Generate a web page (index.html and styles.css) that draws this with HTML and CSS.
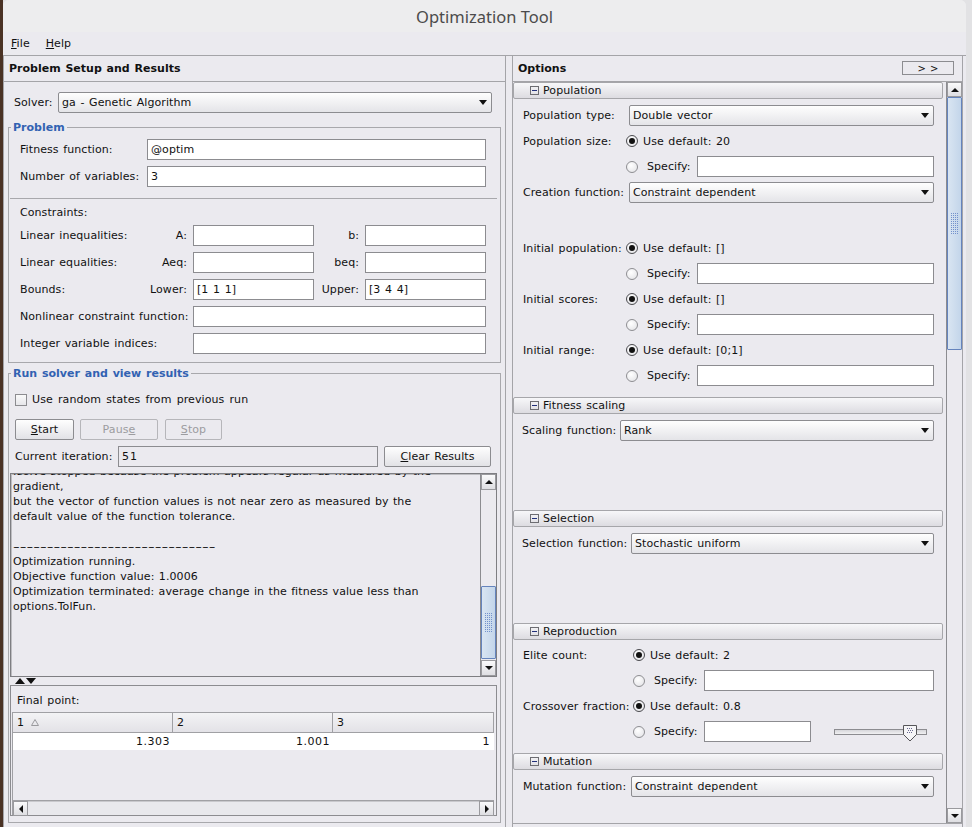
FILE: index.html
```html
<!DOCTYPE html>
<html>
<head>
<meta charset="utf-8">
<title>Optimization Tool</title>
<link rel="stylesheet" href="styles.css">
</head>
<body>
<div class="window">
  <div class="titlebar">Optimization Tool</div>
  <div class="menubar"><span class="menu"><u>F</u>ile</span><span class="menu"><u>H</u>elp</span></div>
  <div class="main">
    <div class="left">
      <div class="panel-head">Problem Setup and Results</div>
      <div class="left-body">
        <div class="solver-row">
          <span class="solver-lbl">Solver:</span>
          <div class="combo solver-combo"><span class="combo-text">ga - Genetic Algorithm</span><span class="caret"></span></div>
        </div>

        <div class="group problem">
          <div class="group-title">Problem</div>
          <div class="fit-grid">
            <span>Fitness function:</span><div class="field">@optim</div>
            <span>Number of variables:</span><div class="field">3</div>
          </div>
          <div class="sep"></div>
          <div class="constraints-title">Constraints:</div>
          <div class="cgrid">
            <span>Linear inequalities:</span><span class="sub">A:</span><div class="field"></div><span class="sub">b:</span><div class="field"></div>
            <span>Linear equalities:</span><span class="sub">Aeq:</span><div class="field"></div><span class="sub">beq:</span><div class="field"></div>
            <span>Bounds:</span><span class="sub">Lower:</span><div class="field">[1 1 1]</div><span class="sub">Upper:</span><div class="field">[3 4 4]</div>
            <span class="span2">Nonlinear constraint function:</span><div class="field span3"></div>
            <span class="span2">Integer variable indices:</span><div class="field span3"></div>
          </div>
        </div>

        <div class="group run">
          <div class="group-title">Run solver and view results</div>
          <div class="chk-row"><span class="checkbox"></span><span>Use random states from previous run</span></div>
          <div class="btn-row">
            <div class="btn btn-start"><u>S</u>tart</div>
            <div class="btn btn-pause disabled">Paus<u>e</u></div>
            <div class="btn btn-stop disabled"><u>S</u>top</div>
          </div>
          <div class="iter-row">
            <span class="iter-lbl">Current iteration:</span>
            <div class="field iter-field">51</div>
            <div class="btn btn-clear"><u>C</u>lear Results</div>
          </div>
          <div class="output">
            <div class="output-text"><pre>fsolve stopped because the problem appears regular as measured by the
gradient,
but the vector of function values is not near zero as measured by the
default value of the function tolerance.

<span class="dashes">------------------------------</span>
Optimization running.
Objective function value: 1.0006
Optimization terminated: average change in the fitness value less than
options.TolFun.</pre></div>
            <div class="vscroll out-vs">
              <div class="sb-btn"><span class="tri-up"></span></div>
              <div class="track out-track1"></div>
              <div class="thumb out-thumb"><svg width="7" height="20" viewBox="0 0 7 20"><defs><pattern id="dots1" width="2" height="2" patternUnits="userSpaceOnUse"><rect width="1" height="1" fill="#7391cc"/></pattern></defs><rect width="7" height="20" fill="url(#dots1)"/></svg></div>
              <div class="track"></div>
              <div class="sb-btn"><span class="tri-down"></span></div>
            </div>
          </div>
          <div class="split-arrows"><span class="big-up"></span><span class="big-down"></span></div>
          <div class="final">
            <div class="final-lbl">Final point:</div>
            <div class="table">
              <div class="thead">
                <div class="th">1 <svg class="sort" width="8" height="7" viewBox="0 0 8 7"><polygon points="0.5,6.5 4,0.5 7.5,6.5" fill="none" stroke="#9a9a9e" stroke-width="1"/></svg></div>
                <div class="th">2</div>
                <div class="th">3</div>
              </div>
              <div class="trow">
                <div class="td">1.303</div>
                <div class="td">1.001</div>
                <div class="td td-last">1</div>
              </div>
              <div class="tfill"></div>
              <div class="hscroll">
                <div class="sb-btn hbtn"><span class="tri-left"></span></div>
                <div class="hs-track"></div>
                <div class="sb-btn hbtn"><span class="tri-right"></span></div>
              </div>
            </div>
          </div>
        </div>
      </div>
    </div>

    <div class="divider"></div>

    <div class="right">
      <div class="opt-head"><span>Options</span><div class="expand-btn">&gt; &gt;</div></div>
      <div class="opt-scroll">
        <div class="opt-content">
          <div class="sec-head"><span class="minus"></span><span>Population</span></div>
          <div class="sec-body pop-body">
            <div class="row"><span class="pl-c">Population type:</span><div class="combo pop-combo"><span class="combo-text">Double vector</span><span class="caret"></span></div></div>
            <div class="row r20"><span class="pl-r">Population size:</span><span class="radio on"></span><span class="rtext">Use default: 20</span></div>
            <div class="row"><span class="pl-r"></span><span class="radio"></span><span class="spec">Specify:</span><div class="field pop-field"></div></div>
            <div class="row"><span class="pl-c">Creation function:</span><div class="combo pop-combo"><span class="combo-text">Constraint dependent</span><span class="caret"></span></div></div>
            <div class="row r20 after-gap"><span class="pl-r">Initial population:</span><span class="radio on"></span><span class="rtext">Use default: []</span></div>
            <div class="row"><span class="pl-r"></span><span class="radio"></span><span class="spec">Specify:</span><div class="field pop-field"></div></div>
            <div class="row r20"><span class="pl-r">Initial scores:</span><span class="radio on"></span><span class="rtext">Use default: []</span></div>
            <div class="row"><span class="pl-r"></span><span class="radio"></span><span class="spec">Specify:</span><div class="field pop-field"></div></div>
            <div class="row r20"><span class="pl-r">Initial range:</span><span class="radio on"></span><span class="rtext">Use default: [0;1]</span></div>
            <div class="row"><span class="pl-r"></span><span class="radio"></span><span class="spec">Specify:</span><div class="field pop-field"></div></div>
          </div>

          <div class="sec-head"><span class="minus"></span><span>Fitness scaling</span></div>
          <div class="sec-body fit-body">
            <div class="row"><span class="fl">Scaling function:</span><div class="combo fit-combo"><span class="combo-text">Rank</span><span class="caret"></span></div></div>
          </div>

          <div class="sec-head"><span class="minus"></span><span>Selection</span></div>
          <div class="sec-body sel-body">
            <div class="row"><span class="sl">Selection function:</span><div class="combo sel-combo"><span class="combo-text">Stochastic uniform</span><span class="caret"></span></div></div>
          </div>

          <div class="sec-head"><span class="minus"></span><span>Reproduction</span></div>
          <div class="sec-body rep-body">
            <div class="row r20"><span class="rl">Elite count:</span><span class="radio on"></span><span class="rtext">Use default: 2</span></div>
            <div class="row"><span class="rl"></span><span class="radio"></span><span class="spec">Specify:</span><div class="field rep-field"></div></div>
            <div class="row r20"><span class="rl">Crossover fraction:</span><span class="radio on"></span><span class="rtext">Use default: 0.8</span></div>
            <div class="row"><span class="rl"></span><span class="radio"></span><span class="spec">Specify:</span><div class="field cross-field"></div>
              <div class="slider"><svg class="slider-thumb" width="14" height="17" viewBox="0 0 14 17"><polygon points="0.5,0.5 13.5,0.5 13.5,9.5 7,16 0.5,9.5" fill="#f5f5f7" stroke="#555558" stroke-width="1"/><g fill="#6a6a90"><rect x="4" y="3" width="1" height="1"/><rect x="6" y="3" width="1" height="1"/><rect x="8" y="3" width="1" height="1"/><rect x="5" y="5" width="1" height="1"/><rect x="7" y="5" width="1" height="1"/><rect x="9" y="5" width="1" height="1"/><rect x="4" y="7" width="1" height="1"/><rect x="6" y="7" width="1" height="1"/><rect x="8" y="7" width="1" height="1"/></g></svg></div>
            </div>
          </div>

          <div class="sec-head"><span class="minus"></span><span>Mutation</span></div>
          <div class="sec-body mut-body">
            <div class="row"><span class="ml">Mutation function:</span><div class="combo mut-combo"><span class="combo-text">Constraint dependent</span><span class="caret"></span></div></div>
          </div>
        </div>
        <div class="vscroll opt-vs">
          <div class="sb-btn"><span class="tri-up"></span></div>
          <div class="thumb opt-thumb"><svg width="7" height="22" viewBox="0 0 7 22"><defs><pattern id="dots2" width="2" height="2" patternUnits="userSpaceOnUse"><rect width="1" height="1" fill="#7391cc"/></pattern></defs><rect width="7" height="22" fill="url(#dots2)"/></svg></div>
          <div class="track"></div>
          <div class="sb-btn"><span class="tri-down"></span></div>
        </div>
      </div>
    </div>
  </div>
</div>
</body>
</html>
```
FILE: styles.css
```css
* { box-sizing: border-box; }
html, body { margin: 0; padding: 0; }
body {
  width: 972px; height: 827px; overflow: hidden;
  background: linear-gradient(to right, #4a3224 0, #4a3224 3px, #e2e2e4 3px);
  font-family: "DejaVu Sans", "Liberation Sans", sans-serif;
  font-size: 11px; color: #111;
  letter-spacing: 0.08px; word-spacing: 1px;
}
u { text-underline-offset: 1px; }

.window {
  margin-left: 3px; width: 963px; height: 827px;
  background: #ebeaef; border-radius: 6px 6px 0 0;
  display: flex; flex-direction: column; overflow: hidden;
}
.titlebar {
  height: 32px; flex: none; background: #ededee;
  display: flex; align-items: center; justify-content: center;
  font-family: "Noto Sans", "Open Sans", sans-serif; font-size: 16.5px; color: #4b4b4b;
  letter-spacing: 0; word-spacing: 0;
}
.menubar { height: 23px; flex: none; display: flex; align-items: center; gap: 16px; padding-left: 8px; }
.main { flex: 1; display: flex; border-top: 1px solid #a4a4a8; min-height: 0; }

/* left */
.left { width: 503px; flex: none; border-left: 1px solid #a4a4a8; border-right: 1px solid #a4a4a8; }
.panel-head { height: 26px; border-bottom: 1px solid #a4a4a8; padding-left: 5px; line-height: 25px; font-weight: bold; letter-spacing: 0; }
.left-body { padding: 10px 0 0 4px; }
.solver-row { display: flex; align-items: center; height: 21px; margin-left: 6px; }
.solver-lbl { width: 44px; }
.solver-combo { width: 434px; }

.combo {
  height: 21px; display: flex; align-items: center; flex: none;
  border: 1px solid #8c8c90; border-radius: 2px;
  background: linear-gradient(#fefefe, #e4e4e8); padding-left: 3px;
}
.combo-text { flex: 1; }
.caret { width: 0; height: 0; border-left: 4px solid transparent; border-right: 4px solid transparent; border-top: 5px solid #111; margin-right: 4px; }
.field {
  height: 21px; background: #fff; border: 1px solid #8c8c90; flex: none;
  padding-left: 3px; display: flex; align-items: center; white-space: pre;
}

.group { width: 493px; border: 1px solid #a8a8ac; }
.group-title {
  width: max-content; margin: -8px 0 0 2px; padding: 0 2px;
  background: #ebeaef; color: #3262b2; font-weight: bold; line-height: 15px; letter-spacing: 0;
}
.problem { margin-top: 14px; padding-bottom: 8px; }
.fit-grid { display: grid; grid-template-columns: 127px 339px; grid-auto-rows: 21px; row-gap: 6px; margin-top: 4px; padding-left: 11px; align-items: center; }
.sep { height: 1px; background: #a8a8ac; margin: 11px 3px 0 1px; }
.constraints-title { margin-top: 6px; line-height: 15px; padding-left: 11px; }
.cgrid { display: grid; grid-template-columns: 130px 43px 121px 51px 121px; grid-auto-rows: 21px; row-gap: 6px; margin-top: 5px; padding-left: 11px; align-items: center; }
.sub { text-align: right; padding-right: 6px; }
.span2 { grid-column: 1 / 3; }
.span3 { grid-column: 3 / 6; }

.run { margin-top: 10px; padding-bottom: 6px; }
.chk-row { display: flex; align-items: center; height: 15px; margin: 11px 0 0 6px; gap: 5px; }
.chk-row span:last-child { word-spacing: 1.6px; }
.checkbox { width: 12px; height: 12px; border: 1px solid #8c8c90; background: linear-gradient(#fafafa, #e6e6ea); }
.btn-row { display: flex; height: 21px; margin: 12px 0 0 6px; }
.btn {
  height: 21px; display: flex; align-items: center; justify-content: center; flex: none;
  border: 1px solid #8c8c90; border-radius: 2px; background: linear-gradient(#fefefe, #e2e2e6);
}
.btn.disabled { border-color: #b6b6ba; background: transparent; color: #9c9ca0; }
.btn-start { width: 59px; }
.btn-pause { width: 78px; margin-left: 6px; }
.btn-stop { width: 57px; margin-left: 7px; }
.iter-row { display: flex; align-items: center; height: 21px; margin: 6px 0 0 6px; }
.iter-lbl { width: 103px; }
.iter-field { width: 260px; background: transparent; letter-spacing: 1px; }
.btn-clear { width: 107px; margin-left: 6px; }

.output {
  display: flex; width: 487px; height: 204px; margin: 6px 0 0 1px;
  border: 1px solid #7e7e82; box-shadow: inset 1px 1px 0 #bdbdc1;
}
.output-text { flex: 1; overflow: hidden; padding-left: 2px; }
.output-text pre { margin: -10px 0 0 0; font: inherit; line-height: 15px; word-spacing: 0.8px; }
.dashes { display: inline-block; transform: scaleX(1.7); transform-origin: left center; letter-spacing: 0; }

.vscroll { display: flex; flex-direction: column; width: 16px; flex: none; border-left: 1px solid #8c8c90; background: #ebeaef; }
.sb-btn {
  height: 16px; flex: none; display: flex; align-items: center; justify-content: center;
  border: 1px solid #9a9a9e; background: linear-gradient(#fafafb, #dedee2);
}
.track { flex: 1; }
.out-track1 { flex: none; height: 96px; }
.out-thumb { height: 73px; }
.thumb {
  flex: none; border: 1px solid #6584bd; border-radius: 1px;
  background: linear-gradient(to right, #d9e5f2, #c3d5ea);
  display: flex; align-items: center; justify-content: center;
}
.thumb svg { display: block; }
.tri-up { width: 0; height: 0; border-left: 4px solid transparent; border-right: 4px solid transparent; border-bottom: 4px solid #111; }
.tri-down { width: 0; height: 0; border-left: 4px solid transparent; border-right: 4px solid transparent; border-top: 4px solid #111; }
.tri-left { width: 0; height: 0; border-top: 4px solid transparent; border-bottom: 4px solid transparent; border-right: 4px solid #111; }
.tri-right { width: 0; height: 0; border-top: 4px solid transparent; border-bottom: 4px solid transparent; border-left: 4px solid #111; }

.split-arrows { height: 8px; display: flex; align-items: center; padding-left: 6px; gap: 1px; }
.big-up { width: 0; height: 0; border-left: 5px solid transparent; border-right: 5px solid transparent; border-bottom: 6px solid #111; }
.big-down { width: 0; height: 0; border-left: 5px solid transparent; border-right: 5px solid transparent; border-top: 6px solid #111; }

.final { width: 487px; height: 131px; margin-left: 1px; border: 1px solid #8c8c90; display: flex; flex-direction: column; }
.final-lbl { padding: 7px 0 0 6px; line-height: 15px; }
.table { margin: 4px 0 0 1px; width: 482px; flex: 1; display: flex; flex-direction: column; border-left: 1px solid #a0a0a4; border-top: 1px solid #a0a0a4; }
.thead { display: grid; grid-template-columns: 160px 160px 161px; height: 20px; flex: none; }
.th {
  border-right: 1px solid #a0a0a4; border-bottom: 1px solid #a0a0a4;
  background: linear-gradient(#f3f3f5, #e3e2e7);
  padding-left: 4px; display: flex; align-items: center; gap: 7px;
}
.trow { display: grid; grid-template-columns: 160px 160px 161px; height: 17px; flex: none; background: #fff; }
.td { text-align: right; padding-right: 3px; line-height: 17px; letter-spacing: 0.5px; }
.td-last { padding-right: 4px; }
.tfill { flex: 1; }
.hscroll { height: 15px; flex: none; display: flex; border-top: 1px solid #a0a0a4; }
.hbtn { width: 15px; height: 15px; }
.hs-track { flex: 1; background: #e8e8ec; border-top: 1px solid #c8c8cc; }

/* right */
.divider { width: 6px; flex: none; }
.right { width: 451px; flex: none; border-left: 1px solid #a4a4a8; border-right: 1px solid #a4a4a8; display: flex; flex-direction: column; }
.opt-head {
  height: 26px; flex: none; border-bottom: 1px solid #a4a4a8;
  display: flex; align-items: center; justify-content: space-between;
  padding: 0 8px 0 5px; font-weight: bold; letter-spacing: 0;
}
.expand-btn {
  width: 52px; height: 14px; border: 1px solid #8c8c90; margin-top: -1px;
  font-weight: normal; font-size: 10px; display: flex; align-items: center; justify-content: center;
}
.opt-scroll { height: 742px; flex: none; display: flex; border-bottom: 1px solid #a4a4a8; }
.opt-content { width: 433px; flex: none; overflow: hidden; }
.opt-vs .sb-btn { height: 15px; }
.opt-thumb { height: 253px; }

.sec-head {
  height: 17px; width: 430px; border: 1px solid #a6a6aa; border-radius: 2px;
  background: linear-gradient(#f7f7f9, #dddce1);
  display: flex; align-items: center; padding-left: 16px; gap: 4px; line-height: 15px;
}
.minus { width: 9px; height: 9px; border: 1px solid #6d6d72; display: flex; align-items: center; justify-content: center; }
.minus::after { content: ""; width: 5px; height: 1px; background: #22307a; }

.sec-body { display: flex; flex-direction: column; gap: 5px; }
.pop-body { height: 298px; padding: 6px 0 0 10px; }
.fit-body { height: 96px; padding: 6px 0 0 9px; }
.sel-body { height: 96px; padding: 6px 0 0 9px; }
.rep-body { height: 113px; padding: 5px 0 0 10px; }
.mut-body { padding: 6px 0 0 10px; }
.row { display: flex; align-items: center; height: 21px; flex: none; }
.row.r20 { height: 20px; }
.after-gap { margin-top: 30px; }

.pl-c { width: 106px; flex: none; }
.pl-r { width: 103px; flex: none; }
.pop-combo { width: 305px; }
.pop-field { width: 237px; }
.fl { width: 98px; flex: none; }
.fit-combo { width: 314px; }
.sl { width: 109px; flex: none; }
.sel-combo { width: 303px; }
.rl { width: 110px; flex: none; }
.rep-field { width: 230px; }
.cross-field { width: 107px; }
.ml { width: 108px; flex: none; }
.mut-combo { width: 303px; }

.radio {
  width: 12px; height: 12px; flex: none; border-radius: 50%;
  border: 1px solid #8e8e92;
  background: radial-gradient(circle at 40% 35%, #ffffff, #e0e0e4);
  display: flex; align-items: center; justify-content: center;
}
.radio.on { border-color: #4a4a4e; }
.radio.on::after { content: ""; width: 6px; height: 6px; border-radius: 50%; background: #111; }
.rtext { margin-left: 5px; }
.spec { margin-left: 9px; width: 50px; flex: none; }

.slider {
  position: relative; width: 93px; height: 6px; margin-left: 23px; flex: none;
  border: 1px solid #8c8c90; background: linear-gradient(#d6d6da, #f0f0f2);
}
.slider-thumb { position: absolute; left: 68px; top: -5px; }
```
